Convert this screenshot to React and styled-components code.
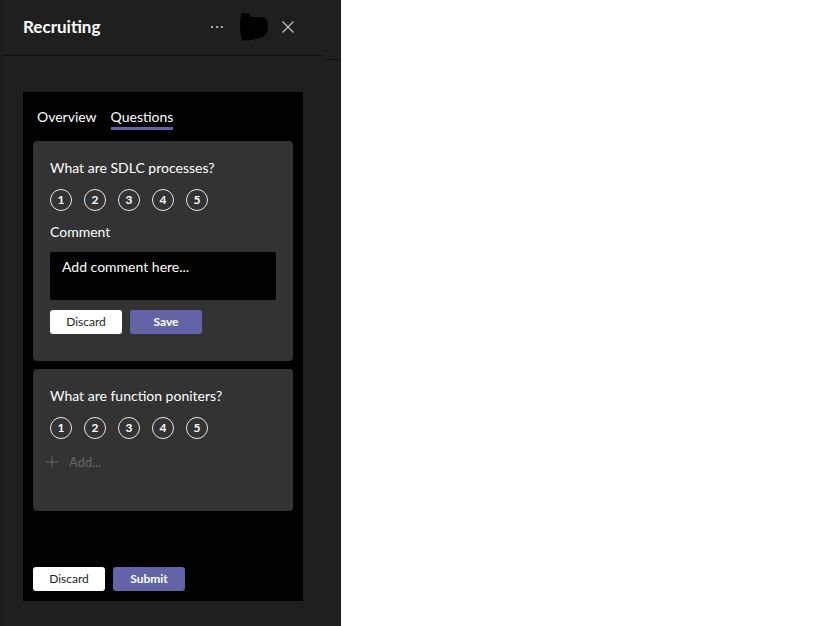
import React from "react";
import styled, { createGlobalStyle } from "styled-components";

const Global = createGlobalStyle`
  html, body { margin: 0; padding: 0; background: #ffffff; }
  body { font-family: "Segoe UI", Lato, "Noto Sans", sans-serif; }
  * { box-sizing: border-box; }
`;

const Panel = styled.div`
  width: 341px;
  height: 626px;
  background: #1f1f1f;
  border-left: 3px solid #1c1c1c;
  display: flex;
  flex-direction: column;
`;

const Top = styled.div`
  display: flex;
  align-items: flex-start;
`;

const HeaderBar = styled.header`
  flex: 1;
  height: 56px;
  padding: 0 0 0 20px;
  display: flex;
  align-items: center;
  border-bottom: 1px solid #111111;
`;

const Gutter = styled.div`
  width: 18px;
  height: 60px;
  border-bottom: 1px solid #111111;
`;

const Title = styled.h1`
  margin: 0;
  flex: 1;
  font-size: 17px;
  font-weight: 700;
  color: #ffffff;
  line-height: 22px;
  padding-bottom: 2px;
`;

const HeaderActions = styled.div`
  display: flex;
  align-items: center;
  padding-right: 29px;
  padding-bottom: 2px;
`;

const IconBtn = styled.span`
  display: flex;
  align-items: center;
  justify-content: center;
  width: ${(p) => p.$w}px;
  margin-left: ${(p) => p.$ml || 0}px;
  color: #c8c8c8;
`;

const Body = styled.div`
  flex: 1;
  padding: 32px 38px 25px 20px;
  display: flex;
`;

const Frame = styled.div`
  flex: 1;
  background: #000000;
  display: flex;
  flex-direction: column;
  padding: 0 10px 10px 10px;
`;

const Tabs = styled.div`
  display: flex;
  gap: 14px;
  padding: 15px 0 0 4px;
  margin-bottom: 11px;
`;

const Tab = styled.div`
  font-size: 14px;
  line-height: 20px;
  color: #ffffff;
  padding-bottom: ${(p) => (p.$active ? 0 : 3)}px;
  border-bottom: ${(p) => (p.$active ? "3px solid #6264a7" : "none")};
`;

const Cards = styled.div`
  display: flex;
  flex-direction: column;
  gap: 8px;
`;

const Card = styled.section`
  background: #333333;
  border-radius: 4px;
  padding: 17px 17px ${(p) => p.$pb}px 17px;
  display: flex;
  flex-direction: column;
`;

const Question = styled.div`
  font-size: 14px;
  line-height: 20px;
  color: #ffffff;
  margin-bottom: 11px;
`;

const Ratings = styled.div`
  display: flex;
  gap: 12px;
  margin-bottom: 11px;
`;

const Rate = styled.span`
  width: 22px;
  height: 22px;
  border-radius: 50%;
  border: 1.5px solid #e6e6e6;
  display: flex;
  align-items: center;
  justify-content: center;
  font-size: 12px;
  font-weight: 700;
  color: #ffffff;
  line-height: 1;
`;

const Label = styled.div`
  font-size: 14px;
  line-height: 20px;
  color: #ffffff;
  margin-bottom: 10px;
`;

const CommentBox = styled.div`
  height: 48px;
  background: #000000;
  border-radius: 2px;
  padding: 5px 12px;
  font-size: 14px;
  line-height: 20px;
  color: #ffffff;
  margin-bottom: 10px;
`;

const ButtonRow = styled.div`
  display: flex;
  gap: 8px;
  margin-top: ${(p) => (p.$auto ? "auto" : "0")};
`;

const Button = styled.button`
  width: 72px;
  height: 24px;
  border: none;
  border-radius: 3px;
  font-family: inherit;
  font-size: 12px;
  line-height: 22px;
  padding: 0 0 1px 0;
  cursor: pointer;
  background: ${(p) => (p.$primary ? "#6264a7" : "#ffffff")};
  color: ${(p) => (p.$primary ? "#ffffff" : "#252423")};
  font-weight: ${(p) => (p.$primary ? 700 : 400)};
`;

const AddRow = styled.div`
  display: flex;
  align-items: center;
  gap: 11px;
  margin: 2px 0 0 -4px;
  font-size: 13px;
  line-height: 20px;
  color: #666666;
`;

const Dots = () => (
  <svg width="14" height="4" viewBox="0 0 14 4">
    <circle cx="2" cy="2" r="1.1" fill="#c8c8c8" />
    <circle cx="7" cy="2" r="1.1" fill="#c8c8c8" />
    <circle cx="12" cy="2" r="1.1" fill="#c8c8c8" />
  </svg>
);

const Blob = () => (
  <svg width="28" height="28" viewBox="0 0 28 28">
    <path
      d="M1.5 0 L9.5 0 L10.5 4 L23 4 Q28 5 28 13 Q28 21 23 24 L15 26 Q11 27.5 2 27.5 Q0 20 0 13 Q0 4 1.5 0 Z"
      fill="#000000"
    />
  </svg>
);

const Close = () => (
  <svg width="12" height="12" viewBox="0 0 12 12">
    <path d="M0.5 0.5 L11.5 11.5 M11.5 0.5 L0.5 11.5" stroke="#c8c8c8" strokeWidth="1.1" />
  </svg>
);

const Plus = () => (
  <svg width="12" height="12" viewBox="0 0 12 12">
    <path d="M6 0 V12 M0 6 H12" stroke="#666666" strokeWidth="1" />
  </svg>
);

const RatingScale = () => (
  <Ratings>
    {[1, 2, 3, 4, 5].map((n) => (
      <Rate key={n}>{n}</Rate>
    ))}
  </Ratings>
);

export default function App() {
  return (
    <>
      <Global />
      <Panel>
        <Top>
          <HeaderBar>
            <Title>Recruiting</Title>
            <HeaderActions>
              <IconBtn $w={14}>
                <Dots />
              </IconBtn>
              <IconBtn $w={28} $ml={16}>
                <Blob />
              </IconBtn>
              <IconBtn $w={12} $ml={14}>
                <Close />
              </IconBtn>
            </HeaderActions>
          </HeaderBar>
          <Gutter />
        </Top>
        <Body>
          <Frame>
            <Tabs>
              <Tab>Overview</Tab>
              <Tab $active>Questions</Tab>
            </Tabs>
            <Cards>
              <Card $pb={27}>
                <Question>What are SDLC processes?</Question>
                <RatingScale />
                <Label>Comment</Label>
                <CommentBox>Add comment here...</CommentBox>
                <ButtonRow>
                  <Button>Discard</Button>
                  <Button $primary>Save</Button>
                </ButtonRow>
              </Card>
              <Card $pb={39}>
                <Question>What are function poniters?</Question>
                <RatingScale />
                <AddRow>
                  <Plus />
                  <span>Add...</span>
                </AddRow>
              </Card>
            </Cards>
            <ButtonRow $auto>
              <Button>Discard</Button>
              <Button $primary>Submit</Button>
            </ButtonRow>
          </Frame>
        </Body>
      </Panel>
    </>
  );
}
